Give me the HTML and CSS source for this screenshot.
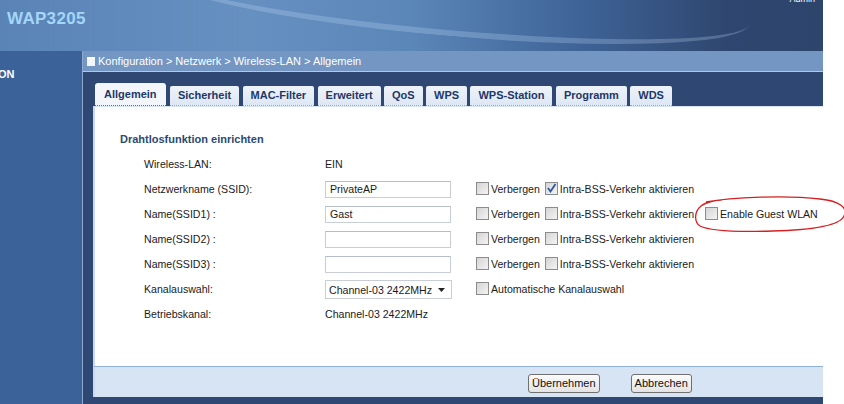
FILE: index.html
```html
<!DOCTYPE html>
<html lang="de">
<head>
    <meta charset="UTF-8">
    <title>WAP3205 - Wireless-LAN</title>
    <link rel="stylesheet" href="styles.css">
</head>
<body>

<div class="page">
    <div class="header">
        <span class="logo">WAP3205</span>
        <span class="swoosh"></span>
        <span class="admin">Admin</span>
    </div>

    <div class="main">
        <div class="sidebar">
            <div class="side-item">ON</div>
        </div>

        <div class="work">
            <div class="crumb">
                <span class="crumb-icon"></span>
                Konfiguration &gt; Netzwerk &gt; Wireless-LAN &gt; Allgemein
            </div>

            <div class="area">
                <div class="tabs">
                    <span class="tab active">Allgemein</span>
                    <span class="tab">Sicherheit</span>
                    <span class="tab">MAC-Filter</span>
                    <span class="tab">Erweitert</span>
                    <span class="tab">QoS</span>
                    <span class="tab">WPS</span>
                    <span class="tab">WPS-Station</span>
                    <span class="tab">Programm</span>
                    <span class="tab">WDS</span>
                </div>

                <div class="panel">
                    <div class="section-title">Drahtlosfunktion einrichten</div>

                    <table class="form">
                        <tr>
                            <td class="label">Wireless-LAN:</td>
                            <td class="value">EIN</td>
                            <td></td>
                        </tr>
                        <tr>
                            <td class="label">Netzwerkname (SSID):</td>
                            <td class="value"><span class="field">PrivateAP</span></td>
                            <td class="opts">
                                <span class="cb"></span>Verbergen
                                <span class="cb checked"><svg width="11" height="11" viewBox="0 0 11 11"><path d="M2 5 L4.5 8.5 L9.5 1" fill="none" stroke="#2b56a8" stroke-width="1.8"/></svg></span>Intra-BSS-Verkehr aktivieren
                            </td>
                        </tr>
                        <tr>
                            <td class="label">Name(SSID1) :</td>
                            <td class="value"><span class="field">Gast</span></td>
                            <td class="opts">
                                <span class="cb"></span>Verbergen
                                <span class="cb"></span>Intra-BSS-Verkehr aktivieren
                                <span class="cb guest"></span>Enable Guest WLAN
                            </td>
                        </tr>
                        <tr>
                            <td class="label">Name(SSID2) :</td>
                            <td class="value"><span class="field"></span></td>
                            <td class="opts">
                                <span class="cb"></span>Verbergen
                                <span class="cb"></span>Intra-BSS-Verkehr aktivieren
                            </td>
                        </tr>
                        <tr>
                            <td class="label">Name(SSID3) :</td>
                            <td class="value"><span class="field"></span></td>
                            <td class="opts">
                                <span class="cb"></span>Verbergen
                                <span class="cb"></span>Intra-BSS-Verkehr aktivieren
                            </td>
                        </tr>
                        <tr>
                            <td class="label">Kanalauswahl:</td>
                            <td class="value">
                                <span class="select">Channel-03 2422MHz<svg width="7" height="4" viewBox="0 0 7 4"><path d="M0 0 H7 L3.5 4 Z" fill="#222"/></svg></span>
                            </td>
                            <td class="opts"><span class="cb"></span>Automatische Kanalauswahl</td>
                        </tr>
                        <tr>
                            <td class="label">Betriebskanal:</td>
                            <td class="value">Channel-03 2422MHz</td>
                            <td></td>
                        </tr>
                    </table>
                </div>

                <div class="footer">
                    <button class="btn apply">Übernehmen</button>
                    <button class="btn">Abbrechen</button>
                </div>
            </div>
        </div>
    </div>
</div>

<!-- hand-drawn red circle around the guest option -->
<svg class="scribble" width="160" height="44" viewBox="0 0 160 44">
    <path d="M14 8 C40 3, 95 1, 128 5 C148 7, 156 14, 152 22 C148 32, 120 36, 80 37 C50 38, 20 38, 8 32 C2 28, 2 18, 9 12 C14 8, 24 6, 30 6"
          fill="none" stroke="#d42020" stroke-width="1.3"/>
</svg>

</body>
</html>
```

FILE: styles.css
```css
body {
    margin: 0;
    width: 844px;
    height: 404px;
    overflow: hidden;
    background: #ffffff;
    font-family: "Liberation Sans", Arial, sans-serif;
    font-size: 11px;
    position: relative;
}
.page {
    width: 823px;
    height: 404px;
}
.header {
    height: 51px;
    position: relative;
    overflow: hidden;
    background: linear-gradient(to right, #5a84b6 0%, #6590c0 30%, #5b86b8 50%, #3f6498 70%, #2f4770 88%, #2d446b 100%);
}
.swoosh {
    position: absolute;
    left: 150px;
    top: -40px;
    width: 600px;
    height: 70px;
    border-radius: 50%;
    border-bottom: 6px solid rgba(200, 225, 250, 0.25);
    transform: rotate(5deg);
}
.logo {
    position: absolute;
    left: 7px;
    top: 9px;
    font-size: 17px;
    font-weight: bold;
    color: #a4d6fa;
    letter-spacing: 0.3px;
}
.admin {
    position: absolute;
    right: 8px;
    top: -6px;
    font-size: 9px;
    color: #ffffff;
}
.main {
    display: flex;
    height: 353px;
}
.sidebar {
    width: 82px;
    background: #3b6399;
    border-right: 1px solid #8eaad0;
}
.side-item {
    color: #ffffff;
    font-weight: bold;
    font-size: 11px;
    margin-top: 17px;
    margin-left: -2px;
}
.work {
    flex: 1;
    display: flex;
    flex-direction: column;
}
.crumb {
    height: 20px;
    line-height: 20px;
    background: #7396c3;
    border-bottom: 1px solid #b4c8e2;
    color: #ffffff;
    font-size: 11px;
    padding-left: 4px;
    display: flex;
    align-items: center;
    gap: 2px;
}
.crumb-icon {
    width: 8px;
    height: 7px;
    background: #f2f5fa;
    border-top: 2px solid #ffffff;
    margin-right: 1px;
}
.area {
    flex: 1;
    background: #2f4773;
    padding: 12px 0 7px 10px;
    display: flex;
    flex-direction: column;
}
.tabs {
    display: flex;
    align-items: flex-end;
    height: 22px;
    padding-left: 2px;
    gap: 3.4px;
}
.tab {
    height: 19px;
    line-height: 19px;
    padding: 0 8px;
    background: linear-gradient(#eef3fa, #dde7f3);
    border-bottom: 1px dotted #8ea6c6;
    border-radius: 2px 2px 0 0;
    color: #1e3766;
    font-weight: bold;
    font-size: 11px;
}
.tab.active {
    height: 22px;
    line-height: 23px;
    padding: 0 9px;
    background: #f2f6fb;
    border-bottom: 1px dotted #5c6f8c;
    border-radius: 3px 3px 0 0;
    margin-right: 1px;
}
.panel {
    height: 260px;
    background: #ffffff;
    border-left: 2px solid #c9daee;
    border-top: 1px solid #d7e4f3;
    box-sizing: border-box;
    padding: 26px 0 0 25px;
}
.section-title {
    color: #2b4a74;
    font-weight: bold;
    font-size: 11px;
    margin-bottom: 6px;
}
.form {
    border-collapse: collapse;
    margin-left: 24px;
}
.form td {
    height: 25px;
    padding: 0;
    color: #1a1a1a;
    white-space: nowrap;
    font-size: 10.6px;
}
.label {
    width: 181px;
}
.value {
    width: 151px;
}
.field {
    display: block;
    width: 120px;
    height: 15px;
    line-height: 15px;
    border: 1px solid #c9ced6;
    border-top-color: #b7bdc6;
    padding-left: 4px;
    margin-top: 1px;
}
.select {
    display: flex;
    align-items: center;
    justify-content: space-between;
    width: 116px;
    height: 17px;
    border: 1px solid #c9ced6;
    padding: 0 6px 0 3px;
    margin-top: 2px;
}
.cb {
    display: inline-block;
    width: 11px;
    height: 11px;
    border: 1px solid #8c8c8c;
    background: linear-gradient(135deg, #d4d4d4, #f4f4f4);
    vertical-align: -2px;
    margin-right: 2px;
    position: relative;
}
.opts .cb:not(:first-child) {
    margin-left: 2px;
}
.cb.checked svg {
    position: absolute;
    left: 0;
    top: 0;
}
.opts .cb.guest {
    margin-left: 8px;
}
.footer {
    height: 30px;
    background: #d6e4f3;
    border-top: 1px solid #8fb1d8;
    border-left: 2px solid #c9daee;
    display: flex;
    align-items: center;
    padding-left: 433px;
    gap: 31px;
}
.btn {
    font-family: "Liberation Sans", Arial, sans-serif;
    font-size: 11px;
    height: 19px;
    padding: 0 3px;
    background: linear-gradient(#fbfbfb, #e3e3e3);
    border: 1px solid #707070;
    border-radius: 3px;
    color: #111;
    margin-top: 2px;
}
.scribble {
    position: absolute;
    left: 692px;
    top: 194px;
}
```
